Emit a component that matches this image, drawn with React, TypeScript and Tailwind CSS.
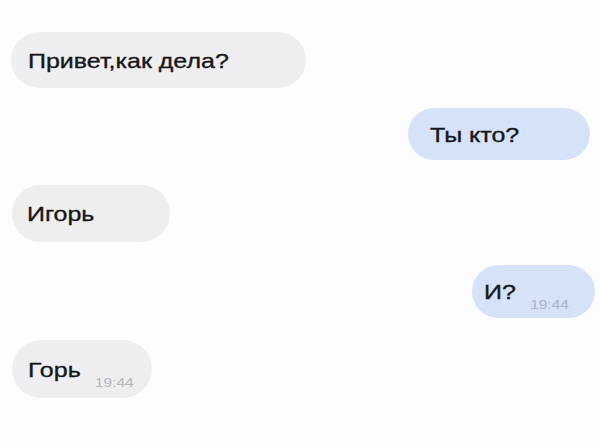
import React from "react";

type Msg = { text: string; out?: boolean; time?: string; w: number; h: number; mt: number; side: number; pl: number };

const messages: Msg[] = [
  { text: "Привет,как дела?", w: 295, h: 56, mt: 32, side: 11, pl: 17 },
  { text: "Ты кто?", out: true, w: 182, h: 52, mt: 20, side: 10, pl: 22 },
  { text: "Игорь", w: 158, h: 57, mt: 25, side: 12, pl: 15 },
  { text: "И?", out: true, time: "19:44", w: 123, h: 53, mt: 23, side: 5, pl: 12 },
  { text: "Горь", time: "19:44", w: 140, h: 58, mt: 22, side: 12, pl: 16 },
];

function Bubble({ m }: { m: Msg }) {
  return (
    <div
      className={`flex items-center rounded-full ${m.out ? "self-end bg-[#d6e2f7]" : "self-start bg-[#eeeef1]"}`}
      style={{
        width: m.w,
        height: m.h,
        marginTop: m.mt,
        marginLeft: m.out ? 0 : m.side,
        marginRight: m.out ? m.side : 0,
        paddingLeft: m.pl,
      }}
    >
      {/* wide-set message line: text plus optional timestamp */}
      <span className="inline-flex origin-left scale-x-[1.19] items-baseline">
        <span className="text-[21px] leading-none text-[#17171a] [-webkit-text-stroke:0.35px_#17171a]">{m.text}</span>
        {m.time && (
          <span
            className={`ml-[12px] translate-y-[10px] text-[13px] leading-none ${m.out ? "text-[#aab3c4]" : "text-[#b6b6bb]"}`}
          >
            {m.time}
          </span>
        )}
      </span>
    </div>
  );
}

export default function App() {
  return (
    <div
      className="flex h-[446px] w-[600px] flex-col bg-[#fdfdfd]"
      style={{ fontFamily: "'Liberation Sans', Arial, sans-serif" }}
    >
      {messages.map((m, i) => (
        <Bubble key={i} m={m} />
      ))}
    </div>
  );
}
